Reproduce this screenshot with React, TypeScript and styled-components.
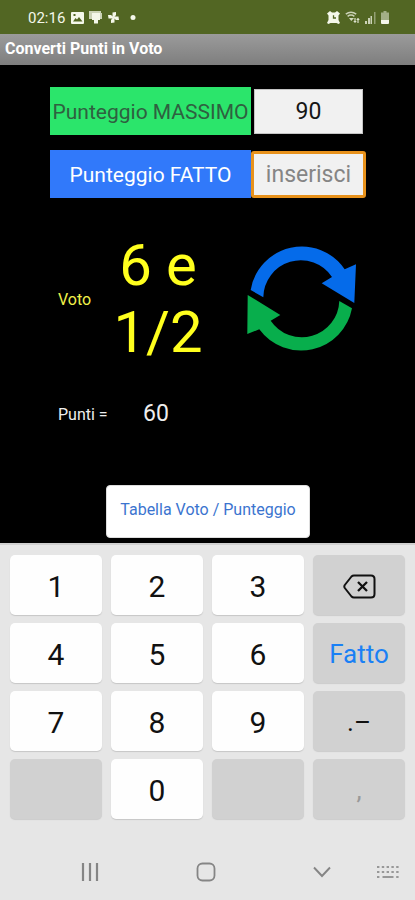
import React, { useState } from "react";
import styled, { createGlobalStyle } from "styled-components";

const GlobalStyle = createGlobalStyle`
  *, *::before, *::after { box-sizing: border-box; }
  body { margin: 0; background: #e6e6e6; font-family: Roboto, "Liberation Sans", sans-serif; }
  button, input { font-family: inherit; }
`;

const Screen = styled.div`
  display: flex;
  flex-direction: column;
  min-height: 100vh;
  background: #000;
`;

const StatusBar = styled.div`
  display: flex;
  align-items: center;
  justify-content: space-between;
  height: 34px;
  padding: 1px 26px 0 28px;
  background: #526623;
  color: #f4f7ea;
`;

const StatusGroup = styled.div`
  display: flex;
  align-items: center;
  gap: 5px;
`;

const Clock = styled.span`
  margin-right: 1px;
  font-size: 15px;
  line-height: 18px;
`;

const TitleBar = styled.h1`
  margin: 0;
  height: 31px;
  padding: 0 5px;
  background: linear-gradient(#9b9b9b, #7e7e7e);
  color: #fff;
  font-size: 16px;
  font-weight: 700;
  line-height: 30px;
`;

const Main = styled.main`
  display: flex;
  flex: 1;
  flex-direction: column;
  padding: 22px 49px 5px 50px;
`;

const Field = styled.div`
  display: grid;
  grid-template-columns: minmax(0, 201fr) minmax(0, 115fr);
  align-items: center;
  margin-bottom: 15px;
`;

const FieldLabel = styled.label<{ $bg: string; $color: string }>`
  height: 48px;
  background: ${(p) => p.$bg};
  color: ${(p) => p.$color};
  font-size: 21px;
  line-height: 50px;
  text-align: center;
  white-space: nowrap;
`;

const FieldInput = styled.input<{ $active?: boolean }>`
  min-width: 0;
  height: ${(p) => (p.$active ? 47 : 45)}px;
  margin: ${(p) => (p.$active ? "0" : "0 3px")};
  padding: 0;
  border: ${(p) => (p.$active ? "3px solid #e8921c" : "1px solid #c4c4c4")};
  border-radius: ${(p) => (p.$active ? 3 : 0)}px;
  outline: none;
  background: #f1f1f1;
  color: #161616;
  font-size: 23px;
  text-align: center;
  &::placeholder { color: #858585; opacity: 1; }
`;

const Result = styled.section`
  display: grid;
  grid-template-columns: 52px 96px 1fr;
  align-items: center;
  margin-top: 19px;
  padding-left: 8px;
`;

const GradeLabel = styled.span`
  color: #f0f04a;
  font-size: 16px;
`;

const Grade = styled.output`
  color: #ffff1e;
  font-size: 58px;
  line-height: 67px;
  text-align: center;
`;

const ConvertButton = styled.button`
  justify-self: end;
  display: flex;
  margin-right: 8px;
  padding: 0;
  border: 0;
  background: none;
`;

const Points = styled.section`
  display: grid;
  grid-template-columns: 52px 92px;
  align-items: center;
  margin-top: 34px;
  padding-left: 8px;
  color: #eee;
  font-size: 16px;
  white-space: nowrap;
`;

const PointsValue = styled.output`
  font-size: 23px;
  line-height: 28px;
  text-align: center;
`;

const TableButton = styled.button`
  align-self: center;
  height: 53px;
  margin-top: auto;
  padding: 0 13px 5px;
  border: 1px solid #ddd;
  border-radius: 4px;
  background: #fff;
  color: #3b74cf;
  font-size: 16px;
  white-space: nowrap;
`;

const Keyboard = styled.div`
  border-top: 2px solid #d0d0d0;
  background: #e6e6e6;
`;

const Keys = styled.div`
  display: grid;
  grid-template-columns: repeat(4, 1fr);
  grid-auto-rows: 60px;
  gap: 8px 9px;
  padding: 10px 10px 0;
`;

const Key = styled.button<{ $tone?: "light" | "dark"; $size?: number; $color?: string }>`
  display: flex;
  align-items: center;
  justify-content: center;
  padding: 2px 0 0;
  border: 0;
  border-radius: 5px;
  background: ${(p) => (p.$tone === "dark" ? "#d1d1d1" : "#fefefe")};
  box-shadow: 0 1px 1px ${(p) => (p.$tone === "dark" ? "#cbcbcb" : "#c6c6c6")};
  color: ${(p) => p.$color ?? "#111"};
  font-size: ${(p) => p.$size ?? 30}px;
`;

const NavRow = styled.nav`
  display: grid;
  grid-template-columns: repeat(3, minmax(0, 116fr)) minmax(0, 16fr);
  align-items: center;
  justify-items: center;
  height: 81px;
  padding: 24px 19px 0 32px;
`;

const NavButton = styled.button`
  display: flex;
  padding: 0;
  border: 0;
  background: none;
  color: #858585;
`;

const PictureIcon = () => (
  <svg width="13" height="12" viewBox="0 0 13 12">
    <path fill="currentColor" fillRule="evenodd" d="M1 0h11q1 0 1 1v10q0 1-1 1H1q-1 0-1-1V1q0-1 1-1zM2 9.500h9.500L8 5 6 7.500 4.500 6zM2.500 2v2h2V2z" />
  </svg>
);

const RollerIcon = () => (
  <svg width="13" height="13" viewBox="0 0 13 13">
    <path fill="currentColor" opacity=".75" d="M0 0h12v2h1v6h-3V5H3v3H0z" />
    <path fill="currentColor" d="M3 2h8v7H9v3.500H5V9H3z" />
  </svg>
);

const PinwheelIcon = () => (
  <svg width="13" height="13" viewBox="0 0 13 13">
    <g fill="currentColor">
      <path d="M5.500 6.500V1.500L9 1v3L7 6.500z" />
      <path d="M6.500 5.500h5l.5 3.500H9L6.500 7z" />
      <path d="M7.500 6.500v5L4 12V9l2-2.500z" />
      <path d="M6.500 7.500h-5L1 4h3l2.500 2z" />
    </g>
  </svg>
);

const DotIcon = () => (
  <svg width="11" height="5" viewBox="0 0 11 5">
    <circle cx="8" cy="2.500" r="2.500" fill="currentColor" />
  </svg>
);

const AlarmIcon = () => (
  <svg width="13" height="13" viewBox="0 0 13 13">
    <path d="M0 2.500 3 0l2 1.500h3L10 0l3 2.500-1.500 2V9L13 12l-1.500 1-2-1h-6l-2 1L0 12l1.500-3V4.500z" fill="currentColor" />
    <path d="M6.500 4.300V7H9" fill="none" stroke="#526623" strokeWidth="1.300" />
  </svg>
);

const WifiIcon = () => (
  <svg width="15" height="13" viewBox="0 0 15 13" fill="none" stroke="currentColor">
    <path d="M.8 3.200Q6 -.8 11.200 3.200M2.600 5.300Q6 2.800 9.400 5.300" strokeWidth="1.500" opacity=".75" />
    <path d="M4 7l2.300 3L9 7z" fill="currentColor" stroke="none" opacity=".8" />
    <path d="M10 7v4M8.800 10l1.200 1.500 1.200-1.500M13 12V7.500M11.800 9 13 7.500 14.200 9" />
  </svg>
);

const SignalIcon = () => (
  <svg width="11" height="12" viewBox="0 0 11 12" fill="currentColor">
    <path d="M0 9h2v3H0zM3 6h2v6H3zM5.500 4h1.500v8H5.500z" opacity=".75" />
    <path d="M9 0h1.500v12H9z" opacity=".4" />
  </svg>
);

const BatteryIcon = () => (
  <svg width="8" height="13" viewBox="0 0 8 13" fill="currentColor">
    <path d="M2.500 0h3v1.500H8V9H0V1.500h2.500z" opacity=".5" />
    <path d="M0 9h8v3q0 1-1 1H1q-1 0-1-1z" />
  </svg>
);

const CycleIcon = () => (
  <svg width="112" height="106" viewBox="0 0 112 106">
    <path fill="#056bea" d="M4.700 44A51.800 51.800 0 0 1 98.700 23.300L110 18.300 108.300 57 75.700 37.300 86 31A37.500 37.500 0 0 0 17.300 51.300z" />
    <path fill="#08ae4c" d="M1.700 49 34.300 69 24.700 74.700A37.500 37.500 0 0 0 93.300 55L106 62.300A51.800 51.800 0 0 1 13.300 83.300L1.300 88z" />
  </svg>
);

const BackspaceIcon = () => (
  <svg width="33" height="25" viewBox="0 0 33 25" fill="none" stroke="#111" strokeWidth="2" strokeLinejoin="round">
    <path d="M11 1.500H28q3.500 0 3.500 3.500V20q0 3.500-3.500 3.500H11q-1.500 0-2.500-1L1.800 14q-1-1.500 0-3L8.500 2.500q1-1 2.500-1z" />
    <path d="M15 8l9 9M24 8l-9 9" strokeWidth="2.300" />
  </svg>
);

const RecentsIcon = () => (
  <svg width="18" height="18" viewBox="0 0 18 18" stroke="currentColor" strokeWidth="2.200">
    <path d="M2 0v18M9 0v18M16 0v18" />
  </svg>
);

const HomeIcon = () => (
  <svg width="20" height="20" viewBox="0 0 20 20">
    <rect x="1.500" y="1.500" width="17" height="17" rx="5" fill="none" stroke="currentColor" strokeWidth="1.800" />
  </svg>
);

const ChevronIcon = () => (
  <svg width="18" height="12" viewBox="0 0 18 12">
    <path d="M1 1.500l8 8.500 8-8.500" fill="none" stroke="currentColor" strokeWidth="1.900" />
  </svg>
);

const KeyboardIcon = () => (
  <svg width="22" height="14" viewBox="0 0 22 14" stroke="currentColor" strokeWidth="2" opacity=".8">
    <path d="M0 2h22M0 7h22" strokeDasharray="2.400 2.400" />
    <path d="M0 12h2.400M5.500 12h11M19.200 12h2.400" />
  </svg>
);

export default function App() {
  const [max, setMax] = useState("90");
  const [score, setScore] = useState("");

  return (
    <>
      <GlobalStyle />
      <Screen>
        <StatusBar>
          <StatusGroup>
            <Clock>02:16</Clock>
            <PictureIcon />
            <RollerIcon />
            <PinwheelIcon />
            <DotIcon />
          </StatusGroup>
          <StatusGroup>
            <AlarmIcon />
            <WifiIcon />
            <SignalIcon />
            <BatteryIcon />
          </StatusGroup>
        </StatusBar>
        <TitleBar>Converti Punti in Voto</TitleBar>
        <Main>
          <Field>
            <FieldLabel htmlFor="max" $bg="#2be56b" $color="#2f6040">Punteggio MASSIMO</FieldLabel>
            <FieldInput id="max" inputMode="numeric" value={max} onChange={(e) => setMax(e.target.value)} />
          </Field>
          <Field>
            <FieldLabel htmlFor="score" $bg="#3179fa" $color="#fff">Punteggio FATTO</FieldLabel>
            <FieldInput id="score" $active inputMode="numeric" placeholder="inserisci" value={score} onChange={(e) => setScore(e.target.value)} />
          </Field>
          <Result>
            <GradeLabel>Voto</GradeLabel>
            <Grade>6 e 1/2</Grade>
            <ConvertButton aria-label="Converti"><CycleIcon /></ConvertButton>
          </Result>
          <Points>
            <span>Punti =</span>
            <PointsValue>60</PointsValue>
          </Points>
          <TableButton>Tabella Voto / Punteggio</TableButton>
        </Main>
        <Keyboard>
          <Keys>
            <Key>1</Key>
            <Key>2</Key>
            <Key>3</Key>
            <Key $tone="dark" aria-label="Cancella"><BackspaceIcon /></Key>
            <Key>4</Key>
            <Key>5</Key>
            <Key>6</Key>
            <Key $tone="dark" $size={26} $color="#1a80f5">Fatto</Key>
            <Key>7</Key>
            <Key>8</Key>
            <Key>9</Key>
            <Key $tone="dark" $size={26}>.–</Key>
            <Key $tone="dark" disabled aria-label="Vuoto" />
            <Key>0</Key>
            <Key $tone="dark" disabled aria-label="Vuoto" />
            <Key $tone="dark" $size={26} $color="#999">,</Key>
          </Keys>
          <NavRow>
            <NavButton aria-label="Recenti"><RecentsIcon /></NavButton>
            <NavButton aria-label="Home"><HomeIcon /></NavButton>
            <NavButton aria-label="Nascondi tastiera"><ChevronIcon /></NavButton>
            <NavButton aria-label="Cambia tastiera"><KeyboardIcon /></NavButton>
          </NavRow>
        </Keyboard>
      </Screen>
    </>
  );
}
